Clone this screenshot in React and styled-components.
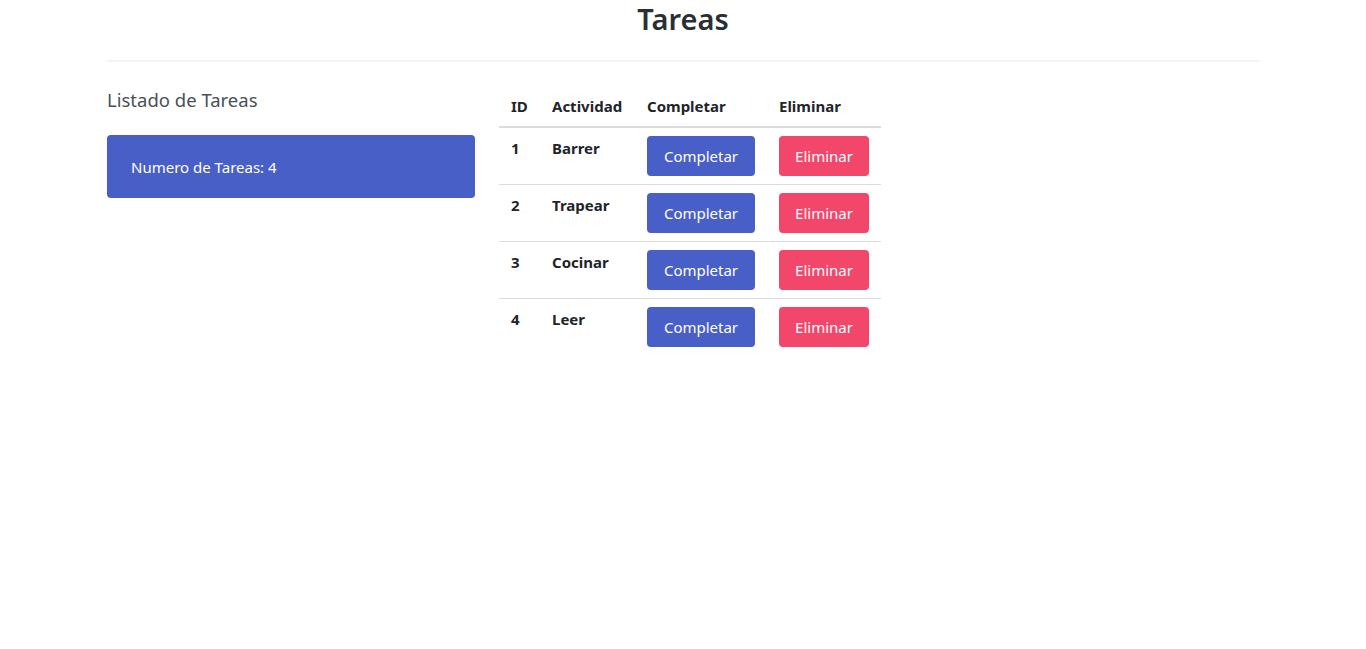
import styled, { createGlobalStyle } from 'styled-components';

const GlobalStyle = createGlobalStyle`
  body {
    margin: 0;
    background: #fff;
    color: #212529;
    font-family: "Noto Sans", "Open Sans", sans-serif;
    font-size: 16px;
  }
`;

// lista fija de tareas
const tareas = [
  { id: 1, actividad: 'Barrer' },
  { id: 2, actividad: 'Trapear' },
  { id: 3, actividad: 'Cocinar' },
  { id: 4, actividad: 'Leer' },
];

function App() {
  return (
    <>
      <GlobalStyle />
      <Container>
        <Title>Tareas</Title>
        <Divider />
        <Row>
          <LeftCol>
            <Subtitle>Listado de Tareas</Subtitle>
            <CountCard>Numero de Tareas: {tareas.length}</CountCard>
          </LeftCol>

          <RightCol>
            <Table>
              <colgroup>
                <col style={{ width: 45 }} />
                <col style={{ width: 95 }} />
                <col style={{ width: 132 }} />
                <col style={{ width: 110 }} />
              </colgroup>
              <thead>
                <tr>
                  <Th>ID</Th>
                  <Th>Actividad</Th>
                  <Th>Completar</Th>
                  <Th>Eliminar</Th>
                </tr>
              </thead>
              <tbody>
                {tareas.map((t) => (
                  <Tr key={t.id}>
                    <Td bold>{t.id}</Td>
                    <Td bold>{t.actividad}</Td>
                    <Td>
                      <Button color="#475fc6" w={108}>Completar</Button>
                    </Td>
                    <Td>
                      <Button color="#f2466a" w={90}>Eliminar</Button>
                    </Td>
                  </Tr>
                ))}
              </tbody>
            </Table>
          </RightCol>
        </Row>
      </Container>
    </>
  );
}
export default App;

let Container = styled.div`
  max-width: 1152px;
  margin: 0 auto;
`;

let Title = styled.h1`
  margin: 0 0 22px;
  text-align: center;
  font-size: 29px;
  font-weight: 600;
  line-height: 38px;
  color: #2b2f33;
`;

let Divider = styled.hr`
  margin: 0 0 24px;
  border: 0;
  border-top: 2px solid #f2f2f2;
`;

let Row = styled.div`
  display: grid;
  grid-template-columns: 368px 1fr;
  column-gap: 24px;
`;

let LeftCol = styled.div`
  display: flex;
  flex-direction: column;
`;

let RightCol = styled.div``;

let Subtitle = styled.h4`
  margin: 2px 0 23px;
  font-size: 18.5px;
  font-weight: 400;
  line-height: 24px;
  color: #495057;
`;

let CountCard = styled.div`
  background: #475fc6;
  color: #fff;
  border-radius: 4px;
  padding: 20px 24px 19px;
  font-size: 15px;
  line-height: 24px;
`;

let Table = styled.table`
  border-collapse: collapse;
  table-layout: fixed;
  width: 382px;
`;

let Th = styled.th`
  text-align: left;
  padding: 8px;
  font-size: 15px;
  font-weight: 700;
  line-height: 24px;
  color: #212529;
  border-bottom: 2px solid #dcdcdc;
  &:first-child {
    padding-left: 12px;
  }
`;

let Tr = styled.tr`
  border-bottom: 1px solid #dcdcdc;
  &:last-child {
    border-bottom: none;
  }
`;

let Td = styled.td`
  padding: 8px;
  vertical-align: top;
  font-size: 15px;
  line-height: 24px;
  font-weight: ${(p) => (p.bold ? 700 : 400)};
  color: #212529;
  &:first-child {
    padding-left: 12px;
  }
`;

let Button = styled.button`
  display: block;
  width: ${(p) => p.w}px;
  height: 40px;
  border: none;
  border-radius: 4px;
  background: ${(p) => p.color};
  color: #fff;
  font-family: inherit;
  font-size: 15px;
  cursor: pointer;
`;
